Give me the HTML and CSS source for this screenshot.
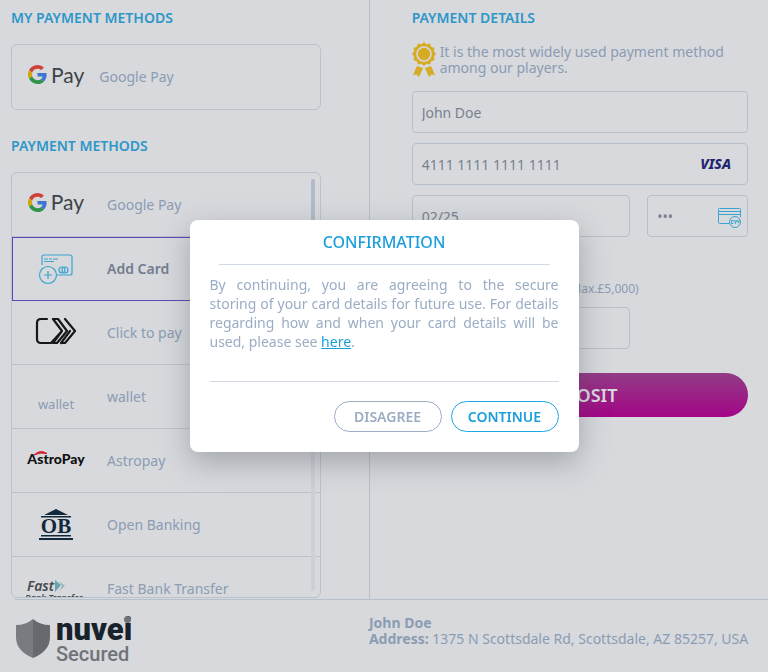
FILE: index.html
```html
<!DOCTYPE html>
<html lang="en">
<head>
    <meta charset="utf-8">
    <meta name="viewport" content="width=device-width, initial-scale=1">
    <title>Payment</title>
    <link rel="stylesheet" href="styles.css">
</head>
<body>
    <svg class="sprite" aria-hidden="true">
        <symbol id="google-g" viewBox="0 0 48 48">
            <path fill="#cf4238" d="M24 9.500c3.500 0 6.700 1.200 9.200 3.600l6.900-6.900C35.900 2.400 30.500 0 24 0 14.600 0 6.500 5.400 2.600 13.200l8 6.200C12.400 13.700 17.700 9.500 24 9.500z"/>
            <path fill="#3f74d1" d="M47 24.600c0-1.600-.2-3.100-.4-4.600H24v9h12.900c-.6 3-2.300 5.500-4.800 7.200l7.700 6C44.400 38 47 31.800 47 24.600z"/>
            <path fill="#d6a50d" d="M10.500 28.600A14.500 14.500 0 0 1 10.500 19.400l-8-6.200A24 24 0 0 0 2.600 34.800z"/>
            <path fill="#329349" d="M24 48c6.500 0 11.900-2.100 15.900-5.800l-7.700-6c-2.200 1.400-4.900 2.300-8.200 2.300-6.300 0-11.600-4.200-13.500-9.900l-8 6.200C6.500 42.600 14.600 48 24 48z"/>
        </symbol>
    </svg>

    <main class="cashier">
        <section class="methods">
            <h2>My payment methods</h2>
            <button type="button" class="saved-method">
                <span class="gpay"><svg width="19" height="19"><use href="#google-g"/></svg>Pay</span>
                <span>Google Pay</span>
            </button>

            <h2>Payment methods</h2>
            <div class="method-list">
                <button type="button" class="method">
                    <span class="logo"><span class="gpay"><svg width="19" height="19"><use href="#google-g"/></svg>Pay</span></span>
                    <span>Google Pay</span>
                </button>
                <button type="button" class="method selected">
                    <span class="logo">
                        <svg width="36" height="32" viewBox="0 0 36 32" fill="none" stroke="#3aa5cf" stroke-width="1.2">
                            <path d="M4 12V4q0-2 2-2h26q2 0 2 2v16q0 2-2 2H19"/>
                            <path d="M6 6h4m1 0h3m1 0h5M6 8.500h10"/>
                            <circle cx="24" cy="17" r="3"/><circle cx="27" cy="17" r="3"/>
                            <circle cx="10" cy="22" r="8.500"/>
                            <path d="M10 18v8M6 22h8"/>
                        </svg>
                    </span>
                    <span>Add Card</span>
                </button>
                <button type="button" class="method">
                    <span class="logo raised">
                        <svg width="42" height="28" viewBox="0 0 42 28" fill="none" stroke="#15171a" stroke-width="2.200" stroke-linejoin="round" stroke-linecap="round">
                            <path d="M12 2H6Q2 2 2 6v16q0 4 4 4h10l11-12L18 2h5l9 12L22 26h-4l9-12"/>
                            <path d="M26 26h4l10-12L30 2M26 26l9-12"/>
                        </svg>
                    </span>
                    <span>Click to pay</span>
                </button>
                <button type="button" class="method">
                    <span class="logo wallet">wallet</span>
                    <span>wallet</span>
                </button>
                <button type="button" class="method">
                    <span class="logo raised"><span class="astropay">AstroPay
                        <svg class="swoosh" width="13" height="5" viewBox="0 0 13 5"><path d="M0 4Q6-2 13 2.500 6 1 0 4z" fill="#d3222d" stroke="#d3222d"/></svg>
                    </span></span>
                    <span>Astropay</span>
                </button>
                <button type="button" class="method">
                    <span class="logo">
                        <svg width="36" height="32" viewBox="0 0 36 32" fill="#12293c">
                            <path d="M18 0l12 6H6zM3 7h30v1.500H3zM3 26h30v1.500H3zM1 29h34v2H1z"/>
                            <text class="ob" x="18" y="24" text-anchor="middle">OB</text>
                        </svg>
                    </span>
                    <span>Open Banking</span>
                </button>
                <button type="button" class="method">
                    <span class="logo fast">
                        <span class="fast-name">Fast<svg width="11" height="12" viewBox="0 0 11 12"><path d="M1 0l6 5-6 7z" fill="#6aa3ad"/><path d="M5 1l6 5-6 5 3-5z" fill="#93b8c2"/></svg></span>
                        <span class="fast-sub">Bank Transfer</span>
                    </span>
                    <span>Fast Bank Transfer</span>
                </button>
                <span class="track"><span class="thumb"></span></span>
            </div>
        </section>

        <section class="details">
            <h2>Payment details</h2>
            <div class="hint">
                <svg width="24" height="36" viewBox="0 0 24 36" fill="#d6ac27">
                    <path d="M12 0l2.600 2.300 3.400-.7 1.200 3.200 3.300 1.100-.6 3.500L24 12l-2.100 2.600.6 3.500-3.300 1.100L18 22.400l-3.400-.7L12 24l-2.600-2.300-3.400.7-1.200-3.200-3.300-1.100.6-3.500L0 12l2.100-2.600-.6-3.500 3.300-1.100L6 1.600l3.400.7z"/>
                    <circle cx="12" cy="12" r="7" fill="none" stroke="#d7d9dd" stroke-width="1.600"/>
                    <path d="M5 24l6 2-4 9-2.500-2.500L1 33zM19 24l-6 2 4 9 2.500-2.500L23 33z"/>
                </svg>
                <p>It is the most widely used payment method among our players.</p>
            </div>
            <form class="card-form">
                <input type="text" aria-label="Cardholder name" value="John Doe">
                <div class="field">
                    <input type="text" aria-label="Card number" value="4111 1111 1111 1111">
                    <span class="visa">VISA</span>
                </div>
                <div class="field-row">
                    <input type="text" aria-label="Expiry date" value="02/25">
                    <div class="field">
                        <input type="password" aria-label="Security code" value="123">
                        <svg class="cvv" width="24" height="20" viewBox="0 0 24 20" fill="none" stroke="#3aa5cf">
                            <path d="M12 15.500H1.500q-1 0-1-1v-13q0-1 1-1h20q1 0 1 1V9M.5 3.500h22M.5 6.500h22"/>
                            <circle cx="17" cy="14" r="5.500" fill="#d7d9dd"/>
                            <path d="M15.500 12.500h-2v3h2M16.500 12l1 3.500 1-3.500M19.500 12l1 3 1-3"/>
                        </svg>
                    </div>
                </div>
                <label class="amount-label" for="amount">Amount (Min.£10 - Max.£5,000)</label>
                <div class="field-row">
                    <input type="text" id="amount">
                </div>
                <button type="button" class="deposit">Deposit</button>
            </form>
        </section>
    </main>

    <footer class="footer">
        <div class="secured">
            <svg width="34" height="40" viewBox="0 0 34 40">
                <path fill="#787b7f" d="M17 0v39Q0 32 0 18V6q10 0 17-6z"/>
                <path fill="#66696d" d="M17 0v39q17-7 17-21V6q-10 0-17-6z"/>
            </svg>
            <div class="brand">
                <span class="nuvei">nuvei<span class="dot"></span></span>
                <span class="secured-text">Secured</span>
            </div>
        </div>
        <address>
            <strong>John Doe</strong><br>
            <strong>Address:</strong> 1375 N Scottsdale Rd, Scottsdale, AZ 85257, USA
        </address>
    </footer>

    <div class="overlay">
        <div class="dialog" role="dialog" aria-labelledby="dialog-title">
            <h3 id="dialog-title">Confirmation</h3>
            <p>By continuing, you are agreeing to the secure storing of your card details for future use. For details regarding how and when your card details will be used, please see <a href="#">here</a>.</p>
            <div class="actions">
                <button type="button">Disagree</button>
                <button type="button" class="primary">Continue</button>
            </div>
        </div>
    </div>
</body>
</html>
```

FILE: styles.css
```css
* {
    box-sizing: border-box;
}
body {
    margin: 0;
    background-color: #d7d9dd;
    color: #8b9cb3;
    font-family: "Noto Sans", "Open Sans", sans-serif;
    font-size: 14px;
    line-height: 16px;
}
button, input {
    font: inherit;
    color: inherit;
}
button {
    cursor: pointer;
}
.sprite {
    display: none;
}
h2 {
    margin: 0 0 17px;
    font-size: 14px;
    line-height: 19px;
    font-weight: 600;
    color: #2d97c8;
    text-transform: uppercase;
}

/* Two columns */
.cashier {
    display: grid;
    grid-template-columns: 12fr 13fr;
}
.methods {
    padding: 8px 48px 1px 11px;
}
.details {
    padding: 8px 20px 0 42px;
    border-left: 1px solid #b5c0cb;
}

/* Payment methods */
.saved-method {
    display: flex;
    align-items: center;
    gap: 15px;
    width: 100%;
    height: 66px;
    margin-bottom: 26px;
    padding: 0 16px;
    background: none;
    border: 1px solid #b8c3ce;
    border-radius: 6px;
}
.method-list {
    position: relative;
    height: 426px;
    overflow: hidden;
    border: 1px solid #b8c3ce;
    border-radius: 6px;
}
.method {
    display: grid;
    grid-template-columns: 86px 1fr;
    align-items: center;
    width: 100%;
    height: 64px;
    padding: 0 8px 0 9px;
    background: none;
    border: 0;
    border-bottom: 1px solid #b8c3ce;
    text-align: left;
}
.method.selected {
    border: 1px solid #5a49b8;
    padding-left: 8px;
    color: #727d8e;
    font-weight: 600;
}
.logo {
    display: flex;
    align-items: center;
    justify-content: center;
    width: 70px;
    white-space: nowrap;
}
.raised {
    padding-bottom: 4px;
}
.gpay {
    display: flex;
    align-items: center;
    gap: 4px;
    padding-bottom: 5px;
    color: #3f4347;
    font-family: Lato, sans-serif;
    font-size: 21px;
    line-height: 24px;
}
.wallet {
    padding-top: 14px;
    font-size: 13px;
}
.astropay {
    position: relative;
    color: #111;
    font-family: Lato, sans-serif;
    font-size: 14px;
    font-weight: 900;
}
.swoosh {
    position: absolute;
    top: 0;
    left: 7px;
}
.ob {
    font-family: "Liberation Serif", serif;
    font-size: 21px;
    font-weight: 700;
}
.fast {
    flex-direction: column;
    align-items: flex-start;
    padding: 4px 0 0 4px;
    color: #484b4f;
    font-style: italic;
    font-weight: 600;
}
.fast-name {
    display: flex;
    align-items: center;
    padding-left: 2px;
    font-size: 14px;
    line-height: 14px;
}
.fast-sub {
    font-size: 9px;
    line-height: 9px;
}
.track {
    position: absolute;
    top: 6px;
    right: 5px;
    bottom: 6px;
    width: 4px;
    border-radius: 2px;
    background-color: #cccfd8;
}
.thumb {
    display: block;
    height: 250px;
    border-radius: 2px;
    background-color: #b2bbc9;
}

/* Card form */
.hint {
    display: flex;
    gap: 4px;
    margin: -2px 0 13px;
}
.hint svg {
    flex: none;
}
.hint p {
    margin: 2px 0 0;
}
.card-form {
    display: flex;
    flex-direction: column;
    gap: 10px;
}
.card-form input {
    width: 100%;
    height: 42px;
    padding: 0 9px;
    background: none;
    border: 1px solid #b5c0cb;
    border-radius: 4px;
    color: #77818e;
}
.field {
    position: relative;
}
.field-row {
    display: grid;
    grid-template-columns: 13fr 6fr;
    gap: 17px;
}
.visa {
    position: absolute;
    top: 13px;
    right: 17px;
    color: #22246f;
    font-style: italic;
    font-weight: 800;
}
.cvv {
    position: absolute;
    top: 13px;
    right: 6px;
}
.amount-label {
    width: 227px;
    margin-top: 34px;
    font-size: 12px;
    text-align: right;
}
.deposit {
    height: 44px;
    margin-top: 14px;
    border: 0;
    border-radius: 22px;
    background: linear-gradient(#923c86, #a30586);
    color: #d9dbdf;
    font-size: 18px;
    font-weight: 600;
    text-transform: uppercase;
}

/* Footer */
.footer {
    display: flex;
    margin-left: 15px;
    padding: 15px 0 8px;
    border-top: 1px solid #b5c0cb;
}
.secured {
    display: flex;
    align-items: center;
    flex: 0 0 47%;
    gap: 6px;
    padding-left: 1px;
}
.brand {
    display: flex;
    flex-direction: column;
    font-family: Roboto, sans-serif;
}
.nuvei {
    position: relative;
    align-self: flex-start;
    color: #17222d;
    font-size: 31px;
    line-height: 30px;
    font-weight: 900;
}
.dot {
    position: absolute;
    top: 1px;
    right: 1px;
    width: 7px;
    height: 7px;
    border-radius: 50%;
    background-color: #707377;
}
.secured-text {
    color: #707377;
    font-size: 20px;
    line-height: 18px;
    font-weight: 500;
}
address {
    font-style: normal;
}

/* Confirmation dialog */
.overlay {
    position: fixed;
    inset: 0;
    display: flex;
    align-items: center;
    justify-content: center;
}
.dialog {
    width: 389px;
    padding: 12px 20px 20px;
    background-color: #fff;
    border-radius: 8px;
    box-shadow: 0 10px 30px rgba(60, 65, 75, 0.35);
}
.dialog h3 {
    margin: 0 9px;
    padding-bottom: 11px;
    border-bottom: 1px solid #cfdae6;
    color: #1a9fdb;
    font-size: 16px;
    line-height: 21px;
    font-weight: 500;
    text-align: center;
    text-transform: uppercase;
}
.dialog p {
    margin: 0;
    padding: 10px 0 30px;
    border-bottom: 1px solid #cfd8e4;
    color: #9badc4;
    line-height: 19px;
    text-align: justify;
}
.dialog a {
    color: #1a9fdb;
}
.actions {
    display: flex;
    justify-content: flex-end;
    gap: 9px;
    padding-top: 19px;
}
.actions button {
    width: 108px;
    height: 31px;
    padding: 0;
    background: none;
    border: 1px solid #9badc4;
    border-radius: 16px;
    color: #9badc4;
    font-weight: 600;
    text-transform: uppercase;
}
.actions .primary {
    border-color: #1fa8e0;
    color: #1a9fdb;
}
```
